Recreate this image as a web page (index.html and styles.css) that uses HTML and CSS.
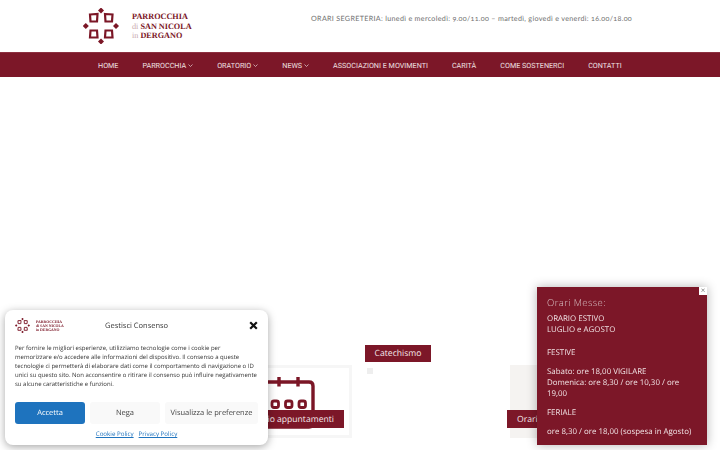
FILE: index.html
```html
<!DOCTYPE html>
<html lang="it">
<head>
    <meta charset="UTF-8">
    <meta name="viewport" content="width=device-width, initial-scale=1.0">
    <title>Parrocchia di San Nicola in Dergano</title>
    <link rel="stylesheet" href="styles.css">
</head>
<body>
    <svg class="defs" width="0" height="0">
        <symbol id="logo-mark" viewBox="0 0 36 36">
            <g fill="none" stroke="#7b1626" stroke-width="2.200">
                <path d="M7 6.500 L14.500 6 L14 13.500 L7.500 13.500 Z"/>
                <path d="M22 6 L29.500 6.500 L29 13.500 L22.500 13.500 Z"/>
                <path d="M7.500 22.500 L14 22.500 L14.500 29.500 L7 29.500 Z"/>
                <path d="M22.500 22.500 L29 22.500 L29.500 29.500 L22 29.500 Z"/>
            </g>
            <g fill="#7b1626">
                <path d="M18 -.5 L21 2.500 L18 5.500 L15 2.500 Z"/>
                <path d="M18 30.500 L21 33.500 L18 36.500 L15 33.500 Z"/>
                <path d="M2.800 15 L5.800 18 L2.800 21 L-.2 18 Z"/>
                <path d="M33 15 L36 18 L33 21 L30 18 Z"/>
            </g>
        </symbol>
    </svg>

    <header class="site-header">
        <a class="brand" href="#">
            <svg class="brand-mark" width="36" height="36"><use href="#logo-mark"/></svg>
            <span class="brand-name">
                <span>PARROCCHIA</span>
                <span><i>di</i> SAN NICOLA</span>
                <span><i>in</i> DERGANO</span>
            </span>
        </a>
        <p class="office-hours">ORARI SEGRETERIA: lunedì e mercoledì: 9.00/11.00 – martedì, giovedì e venerdì: 16.00/18.00</p>
    </header>

    <nav class="main-nav">
        <a href="#">HOME</a>
        <a href="#">PARROCCHIA<svg class="chevron" width="5" height="3" viewBox="0 0 5 3"><path d="M.5.5 2.500 2.500 4.500.5" fill="none" stroke="#e8d5d8" stroke-width=".7"/></svg></a>
        <a href="#">ORATORIO<svg class="chevron" width="5" height="3" viewBox="0 0 5 3"><path d="M.5.5 2.500 2.500 4.500.5" fill="none" stroke="#e8d5d8" stroke-width=".7"/></svg></a>
        <a href="#">NEWS<svg class="chevron" width="5" height="3" viewBox="0 0 5 3"><path d="M.5.5 2.500 2.500 4.500.5" fill="none" stroke="#e8d5d8" stroke-width=".7"/></svg></a>
        <a href="#">ASSOCIAZIONI E MOVIMENTI</a>
        <a href="#">CARITÀ</a>
        <a href="#">COME SOSTENERCI</a>
        <a href="#">CONTATTI</a>
    </nav>

    <main class="services">
        <div class="service service-calendar">
            <div class="service-card card-calendar">
                <svg class="calendar-icon" width="56" height="54" viewBox="0 0 56 54">
                    <g fill="none" stroke="#7b1626" stroke-width="3.400">
                        <path d="M2 6 H44 Q48 6 48 10 V47 Q48 51 44 51 H2"/>
                        <path d="M14 1 V10.500 M33 1 V10.500"/>
                    </g>
                    <g fill="none" stroke="#7b1626" stroke-width="2.800">
                        <rect x="7" y="25" width="6.500" height="6.500" rx="2"/>
                        <rect x="20.500" y="25" width="6.500" height="6.500" rx="2"/>
                        <rect x="34" y="25" width="6.500" height="6.500" rx="2"/>
                    </g>
                </svg>
                <span class="service-label label-calendar">Calendario appuntamenti</span>
            </div>
        </div>
        <div class="service service-catechism">
            <span class="heading-label">Catechismo</span>
            <span class="broken-image"></span>
        </div>
        <div class="service service-masses">
            <div class="service-card card-masses">
                <span class="service-label label-masses">Orari Messe</span>
            </div>
        </div>
    </main>

    <aside class="cookie-modal">
        <div class="cookie-head">
            <span class="cookie-brand">
                <svg width="15" height="15"><use href="#logo-mark"/></svg>
                <span class="cookie-brand-name">
                    <span>PARROCCHIA</span>
                    <span>di SAN NICOLA</span>
                    <span>in DERGANO</span>
                </span>
            </span>
            <span class="cookie-title">Gestisci Consenso</span>
            <svg class="cookie-close" width="9" height="9" viewBox="0 0 9 9"><path d="M1.200 1.200 7.800 7.800 M7.800 1.200 1.200 7.800" stroke="#111" stroke-width="2.200"/></svg>
        </div>
        <p class="cookie-text">Per fornire le migliori esperienze, utilizziamo tecnologie come i cookie per memorizzare e/o accedere alle informazioni del dispositivo. Il consenso a queste tecnologie ci permetterà di elaborare dati come il comportamento di navigazione o ID unici su questo sito. Non acconsentire o ritirare il consenso può influire negativamente su alcune caratteristiche e funzioni.</p>
        <div class="cookie-buttons">
            <button class="btn btn-accept">Accetta</button>
            <button class="btn btn-deny">Nega</button>
            <button class="btn btn-prefs">Visualizza le preferenze</button>
        </div>
        <div class="cookie-links">
            <a href="#">Cookie Policy</a>
            <a href="#">Privacy Policy</a>
        </div>
    </aside>

    <aside class="mass-popup">
        <span class="popup-close">×</span>
        <h3>Orari Messe:</h3>
        <p>ORARIO ESTIVO<br>LUGLIO e AGOSTO</p>
        <p class="gap-big">FESTIVE</p>
        <p>Sabato: ore 18,00 VIGILARE<br>Domenica: ore 8,30 / ore 10,30 / ore 19,00</p>
        <p>FERIALE</p>
        <p>ore 8,30 / ore 18,00 (sospesa in Agosto)</p>
    </aside>
</body>
</html>
```
FILE: styles.css
```css
html, body {
    height: 100%;
    overflow: hidden;
}

body {
    margin: 0;
    background-color: #fff;
    font-family: "Open Sans", sans-serif;
    color: #444;
    text-rendering: geometricPrecision;
}

a {
    color: inherit;
    text-decoration: none;
}

.defs {
    display: block;
    height: 0;
}

/* Header */
.site-header {
    height: 52px;
    display: flex;
    align-items: center;
    padding: 0 88px 0 83px;
    justify-content: space-between;
}

.brand {
    display: flex;
    align-items: center;
    gap: 13px;
    color: #7b1626;
}

.brand-mark {
    display: block;
    overflow: visible;
}

.brand-name {
    display: flex;
    flex-direction: column;
    margin-top: 1px;
    font-family: "Liberation Serif", serif;
    font-size: 8.200px;
    line-height: 9.500px;
    font-weight: bold;
}

.brand-name i {
    font-style: normal;
    font-weight: normal;
    color: #c9a9ae;
}

.office-hours {
    margin: 0 0 16px;
    font-family: Lato, sans-serif;
    font-size: 7.200px;
    letter-spacing: .3px;
    font-feature-settings: "onum";
    color: #707070;
}

/* Nav */
.main-nav {
    height: 25px;
    display: flex;
    align-items: center;
    gap: 24px;
    padding-left: 98px;
    background-color: #7c1728;
    border-top: 1px solid #8d3040;
    box-sizing: border-box;
    font-family: Roboto, sans-serif;
    font-size: 7.200px;
    color: #f0e2e4;
}

.chevron {
    margin-left: 2px;
    vertical-align: 1px;
}

/* Services row */
.services {
    display: flex;
    padding: 268px 0 0 228px;
    height: 105px;
}

.service {
    flex: none;
}

.service-calendar {
    width: 137px;
    padding-top: 20px;
}

.service-catechism {
    width: 145px;
}

.service-masses {
    width: 142px;
    padding-top: 20px;
}

.service-card {
    position: relative;
    height: 73px;
    box-sizing: border-box;
}

.card-calendar {
    width: 124px;
    border: 3px solid #f6f6f6;
    border-left: none;
}

.calendar-icon {
    display: block;
    margin: 8px 0 0 37px;
}

.card-masses {
    background-color: #f5f3f1;
}

.service-label {
    position: absolute;
    top: 45px;
    height: 18px;
    line-height: 18px;
    background-color: #7c1728;
    color: #f5e9ea;
    font-size: 8.600px;
    white-space: nowrap;
    padding: 0 10px;
}

.label-calendar {
    top: 42px;
    right: 5px;
}

.label-masses {
    left: -3px;
}

.heading-label {
    display: block;
    height: 17px;
    line-height: 17px;
    width: 66px;
    text-align: center;
    background-color: #7c1728;
    color: #f5e9ea;
    font-size: 8.600px;
}

.broken-image {
    display: block;
    width: 6px;
    height: 6px;
    margin: 6px 0 0 2px;
    background-color: #eeeeee;
}

/* Cookie modal */
.cookie-modal {
    position: fixed;
    left: 5px;
    top: 310px;
    width: 263px;
    height: 135px;
    box-sizing: border-box;
    padding: 7px 10px 0;
    background-color: #fff;
    border-radius: 8px;
    box-shadow: 0 2px 8px rgba(0, 0, 0, .35);
}

.cookie-head {
    display: flex;
    align-items: center;
    justify-content: space-between;
    height: 17px;
}

.cookie-brand {
    display: flex;
    align-items: center;
    gap: 6px;
    width: 90px;
}

.cookie-brand-name {
    display: flex;
    flex-direction: column;
    font-family: "Liberation Serif", serif;
    font-size: 3.800px;
    line-height: 4px;
    font-weight: bold;
    color: #7b1626;
}

.cookie-title {
    font-size: 7.500px;
    color: #333;
    flex: 1;
}

.cookie-text {
    margin: 10px 0 0;
    font-size: 6px;
    line-height: 9.100px;
    color: #333;
}

.cookie-buttons {
    display: flex;
    gap: 5px;
    margin-top: 13px;
}

.btn {
    height: 22px;
    border: none;
    border-radius: 3px;
    padding: 0;
    font-family: "Open Sans", sans-serif;
    font-size: 7.500px;
    text-rendering: geometricPrecision;
}

.btn-accept {
    width: 70px;
    background-color: #1e73be;
    color: #fff;
}

.btn-deny {
    width: 70px;
    background-color: #f9f9f9;
    color: #444;
}

.btn-prefs {
    width: 93px;
    background-color: #f9f9f9;
    color: #444;
}

.cookie-links {
    display: flex;
    justify-content: center;
    gap: 5px;
    margin-top: 5px;
    font-size: 6.200px;
    color: #1e73be;
}

.cookie-links a {
    text-decoration: underline;
}

/* Mass times popup */
.mass-popup {
    position: fixed;
    left: 537px;
    top: 287px;
    width: 170px;
    height: 158px;
    box-sizing: border-box;
    padding: 10px 9px 0 10px;
    background-color: #7c1728;
    color: #f0e2e4;
    font-size: 7.900px;
    line-height: 11px;
    box-shadow: 0 0 10px rgba(0, 0, 0, .3);
}

.mass-popup h3 {
    margin: 0 0 5px;
    font-size: 9.500px;
    line-height: 12px;
    font-weight: 300;
    letter-spacing: .4px;
    color: #d9c3c6;
}

.mass-popup p {
    margin: 0 0 8px;
}

.mass-popup .gap-big {
    margin-top: 12px;
}

.popup-close {
    position: absolute;
    top: 0;
    right: 0;
    width: 8px;
    height: 8px;
    line-height: 8px;
    text-align: center;
    background-color: #fff;
    color: #777;
    font-size: 8px;
}
```
